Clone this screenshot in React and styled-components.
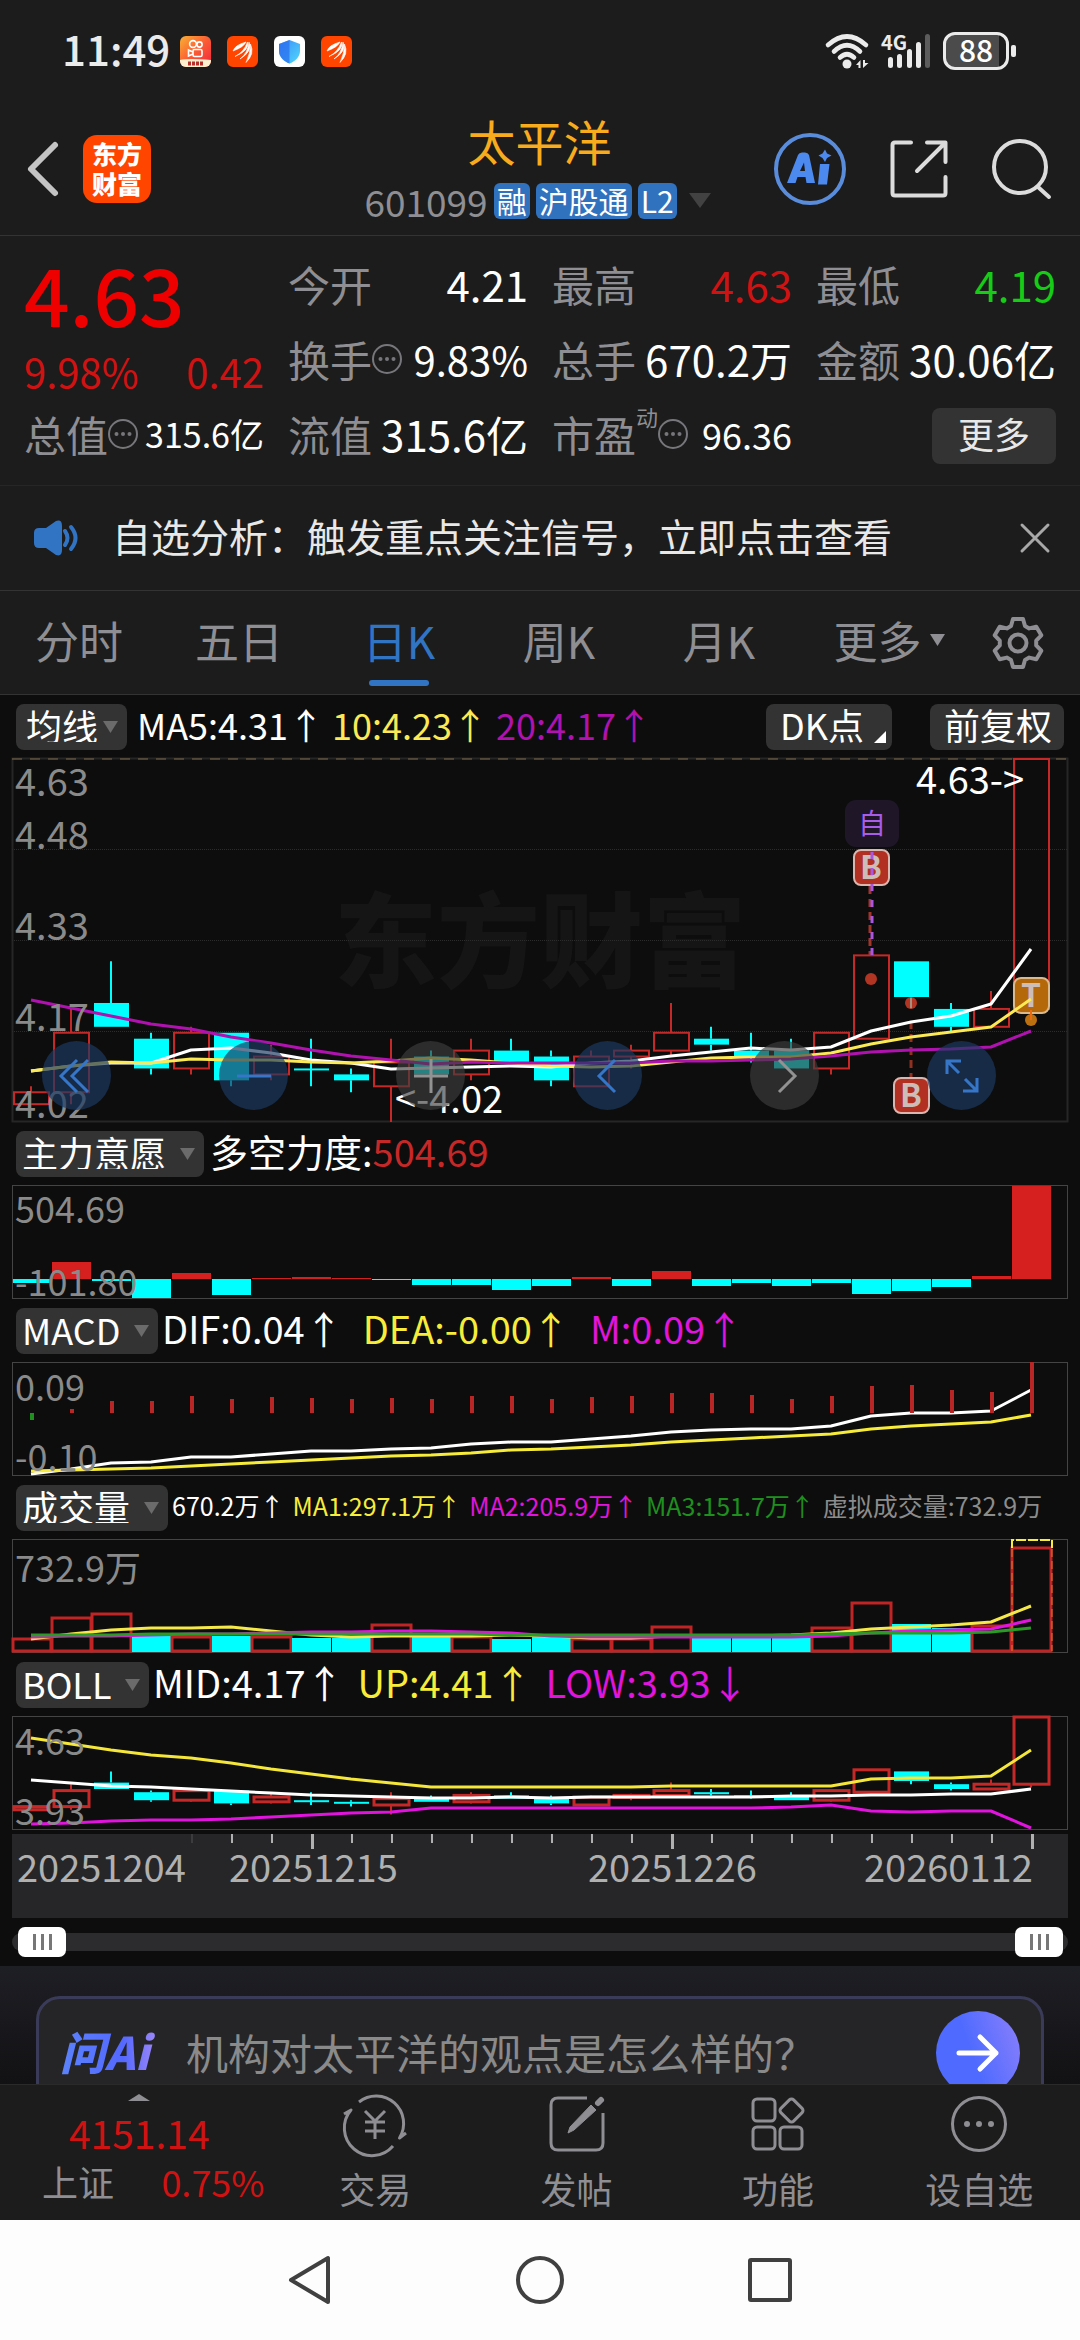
import React from "react";
import styled, { createGlobalStyle, css } from "styled-components";

const c = {
  page: "#1c1c1c",
  chart: "#0d0d0d",
  chip: "#333333",
  line: "#333333",
  dim: "#8e8e93",
  text: "#e8e8e8",
  red: "#d01212",
  up: "#c62828",
  down: "#00ffff",
  blue: "#3274c4",
  yellow: "#f8ec3a",
  magenta: "#e014dc",
  purple: "#b012b0",
  green: "#1f8f1f",
};

const GlobalStyle = createGlobalStyle`
  *, *::before, *::after { box-sizing: border-box; }
  body { margin: 0; background: ${c.page}; }
  body, button, input, select { font-family: "Noto Sans CJK SC", sans-serif; }
  button, select { border: 0; padding: 0; margin: 0; background: none; color: inherit; cursor: pointer; }
  svg { display: block; overflow: visible; }
`;

const Page = styled.div`
  display: flex;
  flex-direction: column;
  color: ${c.text};
  background: ${c.page};
`;

/* ---------- status bar ---------- */
const StatusBar = styled.div`
  display: flex;
  align-items: center;
  justify-content: space-between;
  height: 102px;
  padding: 0 64px 0 62px;
`;
const StatusGroup = styled.div`
  display: flex;
  align-items: center;
  gap: ${(p) => p.$gap}px;
`;
const Clock = styled.time`
  margin-right: -6px;
  padding-bottom: 6px;
  font-size: 42px;
  line-height: 48px;
  font-weight: 500;
  color: #ebebeb;
`;
const Battery = styled.div`
  display: flex;
  align-items: center;
  gap: 2px;
  &::after {
    content: "";
    width: 5px;
    height: 12px;
    border-radius: 2px;
    background: #ebebeb;
  }
`;
const BatteryBody = styled.div`
  width: 66px;
  height: 38px;
  border: 3px solid #ebebeb;
  border-radius: 12px;
  background: linear-gradient(90deg, #4b4b4b 88%, transparent 88%);
  font-size: 30px;
  line-height: 28px;
  font-weight: 500;
  text-align: center;
  color: #fff;
`;

/* ---------- header ---------- */
const Header = styled.header`
  display: grid;
  grid-template-columns: 1fr auto 1fr;
  align-items: center;
  height: 134px;
  padding: 0 28px 0 27px;
  border-bottom: 1px solid ${c.line};
`;
const HeaderSide = styled.div`
  display: flex;
  align-items: center;
  gap: ${(p) => p.$gap}px;
  justify-content: ${(p) => (p.$end ? "flex-end" : "flex-start")};
`;
const IconButton = styled.button`
  display: grid;
  place-items: center;
`;
const BrandLogo = styled.a`
  display: grid;
  grid-template-columns: auto;
  place-content: center;
  width: 68px;
  height: 68px;
  padding-bottom: 2px;
  border-radius: 14px;
  background: #ff4500;
  color: #fff;
  font-size: 25px;
  line-height: 30px;
  font-weight: 900;
  text-decoration: none;
`;
const TitleBlock = styled.div`
  display: flex;
  flex-direction: column;
  align-items: center;
  gap: 14px;
  padding-bottom: 8px;
`;
const StockName = styled.h1`
  margin: 0;
  font-size: 48px;
  line-height: 58px;
  font-weight: 400;
  color: #f8ab1c;
`;
const CodeRow = styled.div`
  display: flex;
  align-items: center;
  gap: 6px;
  font-size: 37px;
  line-height: 36px;
  color: ${c.dim};
`;
const Badge = styled.span`
  height: 36px;
  padding: 0 3px;
  border-radius: 6px;
  background: #3172bf;
  color: #fff;
  font-size: 30px;
  line-height: 34px;
`;

/* ---------- quote ---------- */
const Quote = styled.section`
  display: grid;
  grid-template-columns: repeat(4, 1fr);
  grid-auto-rows: 75px;
  column-gap: 24px;
  padding: 12px 24px;
  border-bottom: 1px solid #262626;
`;
const PriceBlock = styled.div`
  grid-row: span 2;
  display: flex;
  flex-direction: column;
  gap: 12px;
  padding-top: 2px;
  color: ${c.red};
`;
const Price = styled.strong`
  font-size: 80px;
  line-height: 84px;
  font-weight: 500;
  color: #ee0000;
`;
const Change = styled.div`
  display: flex;
  justify-content: space-between;
  font-size: 40px;
  line-height: 50px;
`;
const Cell = styled.div`
  display: flex;
  align-items: center;
  padding-bottom: 3px;
  white-space: nowrap;
  line-height: 50px;
`;
const CellLabel = styled.span`
  font-size: 42px;
  color: ${c.dim};
`;
const CellSup = styled.sup`
  align-self: flex-start;
  margin-top: 6px;
  font-size: 22px;
  line-height: 24px;
  color: ${c.dim};
`;
const CellValue = styled.span`
  margin-left: auto;
  font-size: ${(p) => p.$size || 42}px;
  color: ${(p) => p.$color || "#fff"};
`;
const MoreButton = styled.button`
  align-self: center;
  justify-self: end;
  width: 124px;
  height: 56px;
  padding-bottom: 6px;
  border-radius: 8px;
  background: ${c.chip};
  font-size: 36px;
  line-height: 50px;
`;

/* ---------- notice ---------- */
const Notice = styled.div`
  display: flex;
  align-items: center;
  height: 105px;
  padding: 0 29px 0 34px;
  border-bottom: 1px solid ${c.line};
`;
const NoticeText = styled.a`
  flex: 1;
  margin-left: 32px;
  padding-bottom: 6px;
  color: ${c.text};
  font-size: 39px;
  line-height: 50px;
  text-decoration: none;
`;

/* ---------- tabs ---------- */
const Tabs = styled.nav`
  display: grid;
  grid-template-columns: repeat(5, 160fr) 180fr 76fr 24fr;
  height: 104px;
  border-bottom: 1px solid ${c.line};
`;
const Tab = styled.button`
  position: relative;
  display: flex;
  align-items: center;
  justify-content: center;
  gap: 8px;
  padding: 0 2px 5px 0;
  font-size: 44px;
  line-height: 60px;
  color: ${(p) => (p.$active ? c.blue : c.dim)};
  ${(p) =>
    p.$active &&
    css`
      &::after {
        content: "";
        position: absolute;
        bottom: 8px;
        width: 60px;
        height: 6px;
        border-radius: 3px;
        background: ${c.blue};
      }
    `}
`;
const SettingsButton = styled(IconButton)`
  color: ${c.dim};
`;

/* ---------- charts ---------- */
const ChartArea = styled.main`
  padding: 0 12px;
  background: ${c.chart};
`;
const PanelHead = styled.div`
  display: flex;
  align-items: center;
  height: 63px;
  padding: 0 4px;
  white-space: nowrap;
`;
const SelectBox = styled.span`
  position: relative;
  flex: none;
  height: 46px;
  border-radius: 8px;
  background: ${c.chip};
  color: #fff;
`;
const Select = styled.select`
  appearance: none;
  display: block;
  height: 46px;
  padding: 0 ${(p) => (p.$tight ? 28 : 37)}px 8px ${(p) => (p.$tight ? 10 : 6)}px;
  font-size: 36px;
  line-height: 42px;
`;
const SelectCaret = styled.svg`
  position: absolute;
  top: 17px;
  right: 9px;
  pointer-events: none;
`;
const Legend = styled.div`
  display: flex;
  gap: ${(p) => p.$gap}px;
  margin-left: ${(p) => p.$start}px;
  padding-bottom: 6px;
  font-size: ${(p) => p.$size}px;
  line-height: 46px;
`;
const LegendItem = styled.span`
  color: ${(p) => p.$color};
`;
const HeadActions = styled.div`
  display: flex;
  gap: 38px;
  margin-left: auto;
`;
const ChipButton = styled.button`
  position: relative;
  height: 46px;
  padding: 0 ${(p) => (p.$corner ? 28 : 12)}px 6px 14px;
  border-radius: 8px;
  background: ${c.chip};
  color: #fff;
  font-size: 36px;
  line-height: 40px;
  ${(p) =>
    p.$corner &&
    css`
      &::after {
        content: "";
        position: absolute;
        right: 6px;
        bottom: 7px;
        border-left: 12px solid transparent;
        border-bottom: 12px solid #fff;
      }
    `}
`;
const ChartFrame = styled.div`
  position: relative;
`;
const Chart = styled.svg`
  width: 100%;
  height: auto;
  font-family: "Noto Sans CJK SC", sans-serif;
`;
const ChartControls = styled.div`
  position: absolute;
  left: 30px;
  right: 72px;
  bottom: 12px;
  display: flex;
  justify-content: space-between;
`;
const RoundControl = styled.button`
  display: grid;
  place-items: center;
  width: 69px;
  height: 69px;
  border-radius: 50%;
  color: ${(p) => (p.$muted ? "#929292" : "#3676c8")};
  background: ${(p) => (p.$muted ? "rgba(62, 62, 62, 0.65)" : "rgba(28, 58, 98, 0.68)")};
`;
const AxisWrap = styled.div`
  margin-top: 4px;
  background: #262628;
`;

const RangeWrap = styled.div`
  display: flex;
  align-items: center;
  height: 48px;
`;
const RangeTrack = styled.div`
  position: relative;
  flex: 1;
  height: 18px;
  border-radius: 9px;
  background: #2c2c2e;
`;
const RangeInput = styled.input`
  appearance: none;
  position: absolute;
  left: 6px;
  top: -6px;
  width: calc(100% - 11px);
  height: 30px;
  margin: 0;
  background: none;
  pointer-events: none;
  &::-webkit-slider-thumb {
    appearance: none;
    pointer-events: auto;
    width: 48px;
    height: 30px;
    border-radius: 7px;
    background:
      linear-gradient(#777, #777) 15px 7px / 3px 16px no-repeat,
      linear-gradient(#777, #777) 23px 7px / 3px 16px no-repeat,
      linear-gradient(#777, #777) 31px 7px / 3px 16px no-repeat,
      #fff;
  }
`;

/* ---------- ask bar ---------- */
const AskSection = styled.section`
  height: 118px;
  padding: 30px 36px 0;
  overflow: hidden;
  background: linear-gradient(#1e1e25, #121214);
`;
const AskCard = styled.form`
  display: flex;
  align-items: center;
  height: 114px;
  padding: 0 21px;
  border: 3px solid #3a3b58;
  border-radius: 24px;
  background: #252527;
`;
const AskLogo = styled.span`
  width: 126px;
  padding-bottom: 4px;
  font-size: 45px;
  line-height: 56px;
  font-weight: 900;
  font-style: italic;
  color: transparent;
  background: linear-gradient(90deg, #5b83fb, #5468ff 50%, #a48bf7 80%);
  background-clip: text;
`;
const AskInput = styled.input`
  flex: 1;
  min-width: 0;
  height: 68px;
  padding: 0 0 4px;
  border: 0;
  background: none;
  font-size: 42px;
  color: ${c.text};
  &::placeholder { color: #8a8a8a; opacity: 1; }
`;
const AskButton = styled.button`
  display: grid;
  place-items: center;
  width: 84px;
  height: 84px;
  border-radius: 50%;
  background: linear-gradient(70deg, #4f6bff 45%, #8d80fb);
`;

/* ---------- bottom bars ---------- */
const BottomBar = styled.footer`
  display: grid;
  grid-template-columns: 274fr repeat(4, 201fr);
  height: 136px;
  border-top: 1px solid #2a2a2a;
`;
const IndexBox = styled.button`
  display: flex;
  flex-direction: column;
  align-items: center;
  padding: 9px 10px 0 42px;
  color: ${c.red};
`;
const IndexValue = styled.span`
  margin: 3px 28px 0 0;
  font-size: 39px;
  line-height: 56px;
`;
const IndexRow = styled.span`
  display: flex;
  justify-content: space-between;
  width: 100%;
  font-size: 36px;
  line-height: 42px;
`;
const IndexName = styled.span`
  color: ${c.dim};
`;
const IndexCaret = styled.svg`
  margin-right: 28px;
`;
const NavItem = styled.button`
  display: flex;
  flex-direction: column;
  align-items: center;
  gap: 12px;
  padding-top: 9px;
  font-size: 36px;
  line-height: 44px;
  color: ${c.dim};
`;
const SystemNav = styled.nav`
  display: flex;
  align-items: center;
  justify-content: center;
  gap: 182px;
  height: 120px;
  background: #fdfdfd;
`;

/* ---------- data ---------- */
// open, close, high, low for each trading day
const CANDLES = [
  [4.05, 4.07, 4.08, 4.05], [4.07, 4.17, 4.21, 4.05], [4.22, 4.18, 4.29, 4.18],
  [4.16, 4.11, 4.17, 4.1], [4.11, 4.17, 4.18, 4.1], [4.17, 4.09, 4.17, 4.08],
  [4.1, 4.13, 4.15, 4.09], [4.11, 4.11, 4.16, 4.08], [4.1, 4.09, 4.11, 4.07],
  [4.08, 4.12, 4.16, 4.02], [4.13, 4.1, 4.14, 4.1], [4.1, 4.14, 4.16, 4.09],
  [4.14, 4.12, 4.16, 4.12], [4.13, 4.09, 4.14, 4.08], [4.08, 4.13, 4.14, 4.08],
  [4.13, 4.14, 4.15, 4.11], [4.14, 4.17, 4.22, 4.13], [4.16, 4.15, 4.18, 4.14],
  [4.14, 4.13, 4.17, 4.12], [4.14, 4.11, 4.16, 4.11], [4.11, 4.17, 4.17, 4.1],
  [4.16, 4.3, 4.3, 4.16], [4.29, 4.23, 4.29, 4.21], [4.21, 4.18, 4.22, 4.17],
  [4.18, 4.21, 4.24, 4.18], [4.21, 4.63, 4.63, 4.19],
];
const MA5 = [313, 308, 305, 305, 292, 290, 295, 302, 305, 311, 310, 309, 308, 309, 305, 303, 298, 294, 290, 292, 289, 273, 264, 258, 246, 191];
const MA10 = [313, 308, 304, 305, 301, 302, 302, 304, 305, 303, 300, 302, 305, 308, 309, 308, 304, 300, 299, 299, 295, 286, 279, 274, 269, 241];
const MA20 = [242, 250, 258, 266, 271, 279, 285, 292, 298, 302, 306, 304, 305, 305, 305, 305, 303, 303, 302, 301, 298, 294, 292, 291, 289, 273];
const FORCE = [-4, 17, -2, -19, 6, -16, 1, 2, 1, -1, -6, -6, -11, -7, 2, -7, 8, -7, -4, -7, -4, -15, -12, -8, 3, 93];
const MACD = [-7, 4, 12, 12, 17, 14, 16, 15, 14, 15, 14, 17, 17, 14, 16, 17, 20, 20, 18, 14, 17, 27, 28, 23, 21, 51];
const DIF = [112, 107, 101, 100, 95, 95, 92, 89, 89, 87, 86, 82, 80, 80, 77, 74, 70, 68, 67, 67, 64, 54, 51, 51, 49, 28];
const DEA = [109, 108, 107, 106, 104, 102, 100, 98, 96, 94, 93, 91, 88, 87, 85, 83, 80, 78, 76, 74, 72, 67, 64, 62, 60, 53];
const VOLUME = [13, 34, 38, 16, 15, 16, 15, 14, 14, 27, 15, 15, 13, 15, 13, 13, 25, 14, 15, 15, 24, 49, 28, 24, 26, 104];
const VOL_UP = [1, 1, 1, 0, 1, 0, 1, 0, 0, 1, 0, 1, 0, 0, 1, 1, 1, 0, 0, 0, 1, 1, 0, 0, 1, 1];
const VMA1 = [100, 95, 91, 89, 89, 88, 92, 96, 98, 97, 97, 97, 96, 97, 99, 99, 97, 97, 97, 96, 94, 90, 88, 86, 83, 67];
const VMA2 = [98, 97, 97, 96, 95, 95, 94, 93, 93, 92, 92, 93, 94, 97, 98, 98, 98, 98, 98, 98, 97, 94, 92, 91, 90, 81];
const VMA3 = [96, 96, 96, 95, 95, 95, 95, 95, 95, 95, 95, 95, 96, 96, 96, 96, 96, 96, 96, 96, 95, 94, 94, 94, 93, 89];
const UPPER = [22, 28, 34, 39, 42, 47, 53, 58, 63, 67, 71, 71, 71, 71, 71, 71, 70, 70, 70, 70, 70, 63, 62, 62, 60, 34];
const MIDDLE = [64, 67, 70, 71, 73, 75, 77, 79, 80, 81, 82, 82, 81, 82, 81, 81, 81, 81, 81, 80, 80, 79, 79, 78, 78, 73];
const LOWER = [108, 107, 105, 104, 104, 103, 101, 99, 97, 96, 92, 92, 92, 92, 92, 92, 92, 92, 92, 91, 89, 95, 96, 95, 95, 112];
const TICKS = Array.from({ length: 22 }, (_, i) => i + 4);

const cx = (i) => 19 + 40 * i;

function Line({ data, color, width = 3 }) {
  return (
    <polyline points={data.map((y, i) => `${cx(i)},${y}`).join(" ")} fill="none" stroke={color} strokeWidth={width} strokeLinejoin="round" />
  );
}

function Candles({ low, height, stroke = 2 }) {
  const y = (p) => ((4.63 - p) / (4.63 - low)) * height + 1;
  return CANDLES.map(([o, cl, h, l], i) => {
    const isUp = cl > o;
    const top = y(Math.max(o, cl));
    const bottom = y(Math.min(o, cl));
    const color = isUp ? c.up : c.down;
    const left = Math.max(cx(i) - 17, 2);
    return (
      <g key={i}>
        <path d={`M${cx(i)} ${y(h)}V${top}M${cx(i)} ${bottom}V${y(l)}`} stroke={color} strokeWidth="2" />
        {isUp ? (
          <rect x={left} y={top} width={cx(i) + 18 - left} height={Math.max(bottom - top, 2)} fill="none" stroke={color} strokeWidth={stroke} />
        ) : (
          <rect x={left} y={top} width={cx(i) + 18 - left} height={Math.max(bottom - top, 2)} fill={color} />
        )}
      </g>
    );
  });
}

function ScaleText({ x = 3, y, size = 36, children }) {
  return <text x={x} y={y} fontSize={size} fill="#8a8a8a">{children}</text>;
}

function SubFrame() {
  return <rect x="0.5" y="0.5" width="1055" height="113" fill="none" stroke="#444" />;
}

function SignalTag({ x, y, letter, fill, stroke }) {
  return (
    <g>
      <rect x={x - 17} y={y} width="35" height="35" rx="7" fill={fill} stroke={stroke} strokeWidth="2" />
      <text x={x} y={y + 29} fontSize="32" fontWeight="700" textAnchor="middle" fill="#cdbdb8">{letter}</text>
    </g>
  );
}

function MainChart() {
  return (
    <Chart viewBox="0 0 1056 364" role="img" aria-label="日K线">
      <text x="322" y="222" fontSize="103" fontWeight="900" fill="#151515">东方财富</text>
      <rect x="0.5" y="0.5" width="1055" height="363" fill="none" stroke="#262626" strokeWidth="2" />
      <path d="M0 91.5H1056M0 182.5H1056M0 273.5H1056" stroke="#2c2c2c" strokeDasharray="1 1" />
      <path d="M0 1H1056" stroke="#7d6a48" strokeDasharray="10 8" />
      <Candles low={4.02} height={363} />
      <SignalTag x={859} y={92} letter="B" fill="#b23022" stroke="#dcb5ae" />
      <path d="M858 128V197" stroke="#a23428" strokeWidth="3" strokeDasharray="8 5" />
      <path d="M860 94V197" stroke="#a957e0" strokeWidth="3" strokeDasharray="7 9" />
      <rect x="833" y="42" width="54" height="47" rx="11" fill="#1f1728" />
      <text x="860" y="76" fontSize="28" textAnchor="middle" fill="#a95bea">自</text>
      <circle cx="859" cy="221" r="6" fill="#b23422" />
      <circle cx="899" cy="245" r="6" fill="#b23422" />
      <path d="M899 240V250" stroke="#a8907f" strokeWidth="2" />
      <path d="M899 263V320" stroke="#8f3020" strokeWidth="3" strokeDasharray="8 5" />
      <SignalTag x={899} y={320} letter="B" fill="#b23022" stroke="#dcb5ae" />
      <SignalTag x={1019} y={220} letter="T" fill="#b5680a" stroke="#dcb98a" />
      <circle cx="1019" cy="262" r="6" fill="#bd7010" />
      <path d="M1019 252V262" stroke="#f06a10" strokeWidth="2" />
      <Line data={MA5} color="#ffffff" />
      <Line data={MA10} color="#fbe955" />
      <Line data={MA20} color={c.purple} />
      <ScaleText y={38} size={38}>4.63</ScaleText>
      <ScaleText y={91} size={38}>4.48</ScaleText>
      <ScaleText y={182} size={38}>4.33</ScaleText>
      <ScaleText y={273} size={38}>4.17</ScaleText>
      <ScaleText y={360} size={38}>4.02</ScaleText>
      <text x="904" y="36" fontSize="38" fill="#fff">{"4.63->"}</text>
      <text x="383" y="355" fontSize="38" fill="#fff">{"<-4.02"}</text>
    </Chart>
  );
}

function ForceChart() {
  return (
    <Chart viewBox="0 0 1056 114" role="img" aria-label="主力意愿">
      <SubFrame />
      {FORCE.map((v, i) => {
        const x = Math.max(cx(i) - 19, 1);
        return <rect key={i} x={x} y={v > 0 ? 94 - v : 94} width={cx(i) + 20 - x} height={Math.abs(v)} fill={v > 0 ? "#d61f1f" : c.down} />;
      })}
      <ScaleText y={38}>504.69</ScaleText>
      <ScaleText y={111}>-101.80</ScaleText>
    </Chart>
  );
}

function MacdChart() {
  return (
    <Chart viewBox="0 0 1056 114" role="img" aria-label="MACD">
      <SubFrame />
      <Line data={DIF} color="#ffffff" />
      <Line data={DEA} color={c.yellow} />
      {MACD.map((v, i) => (
        <rect key={i} x={cx(i) - 1} y={v > 0 ? 51 - v : 51} width="4" height={Math.abs(v)} fill={v > 0 ? "#b82626" : c.green} />
      ))}
      <ScaleText y={39}>0.09</ScaleText>
      <ScaleText y={109}>-0.10</ScaleText>
    </Chart>
  );
}

function VolumeChart() {
  return (
    <Chart viewBox="0 0 1056 114" role="img" aria-label="成交量">
      <SubFrame />
      {VOLUME.map((v, i) => {
        const x = Math.max(cx(i) - 19, 1);
        const w = cx(i) + 20 - x;
        return VOL_UP[i] ? (
          <rect key={i} x={x} y={113 - v} width={w} height={v - 1} fill="none" stroke="#c02424" strokeWidth="3" />
        ) : (
          <rect key={i} x={x} y={113 - v} width={w} height={v} fill={c.down} />
        );
      })}
      <path d="M1000 9V1H1040V9" fill="none" stroke={c.yellow} strokeWidth="2" strokeDasharray="10 2" />
      <path d="M1000 10V112M1040 10V112" fill="none" stroke="#e07a28" strokeWidth="1" strokeDasharray="8 4" />
      <Line data={VMA1} color="#f4e84a" />
      <Line data={VMA2} color={c.magenta} />
      <Line data={VMA3} color="#2c9a26" />
      <ScaleText y={43}>732.9万</ScaleText>
    </Chart>
  );
}

function BollChart() {
  return (
    <Chart viewBox="0 0 1056 114" role="img" aria-label="BOLL">
      <SubFrame />
      <Candles low={3.93} height={112} stroke={3} />
      <Line data={UPPER} color="#f4e63a" />
      <Line data={MIDDLE} color="#ffffff" />
      <Line data={LOWER} color={c.magenta} />
      <ScaleText y={39}>4.63</ScaleText>
      <ScaleText y={109}>3.93</ScaleText>
    </Chart>
  );
}

function TimeAxis() {
  return (
    <AxisWrap>
      <Chart viewBox="0 0 1056 84" role="img" aria-label="日期">
        {TICKS.map((i) => {
          const major = i % 9 === 7;
          return <rect key={i} x={cx(i)} y="0" width={major ? 3 : 2} height={major ? 15 : 9} fill={i === 4 ? "#3c3c3e" : "#b0b0b0"} />;
        })}
        <g fontSize="38" fill="#b0b0b0">
          <text x="5" y="48">20251204</text>
          <text x="217" y="48">20251215</text>
          <text x="576" y="48">20251226</text>
          <text x="852" y="48">20260112</text>
        </g>
      </Chart>
    </AxisWrap>
  );
}

/* ---------- icons ---------- */
function Caret({ size = 15, color = "#6b6b6b", ...rest }) {
  return (
    <svg width={size} height={size - 3} viewBox="0 0 15 12" aria-hidden="true" {...rest}>
      <path d="M0 0H15L7.5 12Z" fill={color} />
    </svg>
  );
}

function InfoDots() {
  return (
    <svg width="30" height="30" viewBox="0 0 30 30" aria-hidden="true">
      <circle cx="15" cy="15" r="14" fill="none" stroke="#77777b" strokeWidth="2" />
      <g fill="#77777b">
        <circle cx="8.5" cy="15" r="2" />
        <circle cx="15" cy="15" r="2" />
        <circle cx="21.5" cy="15" r="2" />
      </g>
    </svg>
  );
}

function FeatherApp() {
  return (
    <svg width="31" height="31" viewBox="0 0 31 31" aria-hidden="true">
      <rect width="31" height="31" rx="6" fill="#ff4500" />
      <path d="M6 15Q8 9 19 6Q17 11 6 15ZM8 20.500Q17 16 20.500 6Q23 14 8 20.500ZM13 23Q21 17 22 6Q26 15 13 23ZM19 26.500Q23.500 17 23.500 8Q28 18 19 26.500Z" fill="#fff" stroke="#fff" strokeWidth="0.600" />
    </svg>
  );
}

function VideoApp() {
  return (
    <svg width="31" height="31" viewBox="0 0 31 31" aria-hidden="true">
      <defs>
        <linearGradient id="video" x1="0" y1="0" x2="1" y2="1">
          <stop offset="0" stopColor="#f9b233" />
          <stop offset="0.5" stopColor="#fb5c33" />
          <stop offset="1" stopColor="#f0233f" />
        </linearGradient>
      </defs>
      <rect width="31" height="31" rx="6" fill="url(#video)" />
      <g fill="none" stroke="#fff" strokeWidth="1.600">
        <circle cx="13" cy="8" r="3.400" />
        <circle cx="19.500" cy="8.500" r="2.600" />
        <rect x="13" y="13.500" width="9" height="7" rx="1.500" />
        <path d="M13 16L8.500 14V20L13 18" />
      </g>
      <path d="M0 24Q8 22 31 24V25A6 6 0 0 1 25 31H6A6 6 0 0 1 0 25Z" fill="#fff0d0" />
      <path d="M8 27.500H24" stroke="#b5302a" strokeWidth="4" strokeDasharray="3 1" />
    </svg>
  );
}

function ShieldApp() {
  return (
    <svg width="31" height="31" viewBox="0 0 31 31" aria-hidden="true">
      <defs>
        <linearGradient id="shield" x1="0" y1="0" x2="1" y2="1">
          <stop offset="0" stopColor="#3b8cf8" />
          <stop offset="1" stopColor="#4fd8fb" />
        </linearGradient>
      </defs>
      <rect width="31" height="31" rx="6" fill="#fff" />
      <path d="M15.500 4L26 8V15C26 21 21 25.500 15.500 27.500C10 25.500 5 21 5 15V8Z" fill="url(#shield)" />
      <path d="M15.500 4V27.500C10 25.500 5 21 5 15V8Z" fill="#2a6cf0" opacity="0.700" />
    </svg>
  );
}

function Wifi() {
  return (
    <svg width="44" height="36" viewBox="0 0 44 36" aria-hidden="true">
      <g fill="none" stroke="#ebebeb" strokeWidth="4.600" strokeLinecap="round">
        <path d="M3 12Q22 -5 41 12" />
        <path d="M9 18.500Q22 6 35 18.500" />
        <path d="M15 24.500Q22 18 29 24.500" />
      </g>
      <circle cx="22" cy="31" r="4.500" fill="#ebebeb" />
      <path d="M35.500 27V35H33.500V32H31ZM38 35V27L40 27V30H43.500Z" fill="#ebebeb" />
    </svg>
  );
}

function Signal() {
  return (
    <svg width="50" height="36" viewBox="0 0 50 36" fill="#ebebeb" aria-hidden="true">
      <text x="0" y="17" fontSize="20" fontWeight="700">4G</text>
      <rect x="7" y="24" width="5" height="11" rx="2.500" />
      <rect x="16" y="21" width="5" height="14" rx="2.500" />
      <rect x="26" y="16" width="5" height="19" rx="2.500" />
      <rect x="35" y="9" width="5" height="26" rx="2.500" />
      <rect x="44" y="1" width="5" height="34" rx="2.500" fill="#5c5c5c" />
    </svg>
  );
}

function AiIcon() {
  return (
    <svg width="72" height="72" viewBox="0 0 72 72" aria-hidden="true">
      <circle cx="36" cy="36" r="34" fill="none" stroke="#5a8cdc" strokeWidth="4" />
      <path d="M13 50L24 22Q25 19.500 28 19.500H31Q34 19.500 35 22L41 50H32.500L31.500 44H23.500L21.500 50ZM26 38H31L30 29.500Z" fill="#4c8af0" />
      <path d="M46 31H55.500L53 51.500H44ZM51 16.500L53 20.500L57.500 22.500L53 25L51 29L48.500 25L44.500 22.500L48.500 20.500Z" fill="#4c8af0" />
    </svg>
  );
}

function ShareIcon() {
  return (
    <svg width="58" height="58" viewBox="0 0 58 58" fill="none" stroke="#dcdcdc" strokeWidth="4" strokeLinecap="round" strokeLinejoin="round" aria-hidden="true">
      <path d="M21 2.500H5Q2.500 2.500 2.500 5V53Q2.500 55.500 5 55.500H53Q55.500 55.500 55.500 53V37" />
      <path d="M37 2.500H55.500V22M55 3L27 31" />
    </svg>
  );
}

function SearchIcon() {
  return (
    <svg width="60" height="60" viewBox="0 0 60 60" fill="none" stroke="#dcdcdc" strokeWidth="4" strokeLinecap="round" aria-hidden="true">
      <circle cx="28" cy="28" r="26" />
      <path d="M46 48L57 58" />
    </svg>
  );
}

function Speaker() {
  return (
    <svg width="46" height="36" viewBox="0 0 46 36" aria-hidden="true">
      <path d="M5 8H12L22 1Q28 -1 28 6V30Q28 37 22 35L12 28H5Q0 28 0 23V13Q0 8 5 8Z" fill={c.blue} />
      <path d="M31 11Q36 18 31 25M37 7Q46 18 37 29" fill="none" stroke={c.blue} strokeWidth="4" strokeLinecap="round" />
    </svg>
  );
}

function Gear() {
  const points = [];
  for (let k = 0; k < 6; k += 1) {
    const a = (k * Math.PI) / 3;
    [[-7, -17], [-5, -24], [5, -24], [7, -17]].forEach(([x, y]) => {
      points.push(`${(x * Math.cos(a) - y * Math.sin(a)).toFixed(1)},${(x * Math.sin(a) + y * Math.cos(a)).toFixed(1)}`);
    });
  }
  return (
    <svg width="54" height="54" viewBox="-27 -27 54 54" fill="none" stroke="currentColor" strokeWidth="4" strokeLinejoin="round" aria-hidden="true">
      <polygon points={points.join(" ")} />
      <circle r="8.500" />
    </svg>
  );
}

function ControlIcon({ d, width = 3 }) {
  return (
    <svg width="40" height="40" viewBox="-20 -20 40 40" fill="none" stroke="currentColor" strokeWidth={width} aria-hidden="true">
      <path d={d} />
    </svg>
  );
}

const navIcons = {
  trade: (
    <>
      <path d="M-16 -22A27.500 27.500 0 0 1 24.500 14L31 9" />
      <path d="M18 22A27.500 27.500 0 0 1 -24 -14L-31 -10" />
      <path d="M-10 -13L0 -3L10 -13M0 -3V15M-10 -2H10M-10 7H10" />
    </>
  ),
  post: (
    <>
      <path d="M10 -26H-19Q-26 -26 -26 -19V19Q-26 26 -19 26H19Q26 26 26 19V-11" />
      <path d="M-9 9L-7 3L14 -19L19 -14L-3 6Z" fill="currentColor" strokeWidth="1" />
      <path d="M21 -21L24 -24" strokeWidth="6" strokeLinecap="round" />
    </>
  ),
  tools: (
    <>
      <rect x="-25" y="-25" width="22" height="22" rx="4" />
      <rect x="-25" y="3" width="22" height="22" rx="4" />
      <rect x="2" y="3" width="22" height="22" rx="4" />
      <rect x="4.500" y="-22.500" width="18" height="18" rx="3" transform="rotate(45 13.500 -13.500)" />
    </>
  ),
  more: (
    <>
      <circle r="26.500" />
      <g fill="currentColor" stroke="none">
        <circle cx="-12" r="3" />
        <circle r="3" />
        <circle cx="12" r="3" />
      </g>
    </>
  ),
};

function NavIcon({ name }) {
  return (
    <svg width="64" height="60" viewBox="-32 -30 64 60" fill="none" stroke="currentColor" strokeWidth="3" strokeLinejoin="round" aria-hidden="true">
      {navIcons[name]}
    </svg>
  );
}

function SystemIcon({ children }) {
  return (
    <svg width="48" height="48" viewBox="-24 -24 48 48" fill="none" stroke="#404040" strokeWidth="4" strokeLinejoin="round" aria-hidden="true">
      {children}
    </svg>
  );
}

/* ---------- composed parts ---------- */
function IndicatorSelect({ name, tight }) {
  return (
    <SelectBox>
      <Select aria-label="指标" $tight={tight} defaultValue={name}>
        <option>{name}</option>
      </Select>
      <SelectCaret width="15" height="12" viewBox="0 0 15 12" aria-hidden="true">
        <path d="M0 0H15L7.500 12Z" fill="#6b6b6b" />
      </SelectCaret>
    </SelectBox>
  );
}

function IndicatorHead({ name, items, size = 38, gap = 16 }) {
  return (
    <PanelHead>
      <IndicatorSelect name={name} />
      <Legend $size={size} $gap={gap} $start={4}>
        {items.map(([text, color]) => (
          <LegendItem key={text} $color={color}>{text}</LegendItem>
        ))}
      </Legend>
    </PanelHead>
  );
}

const QUOTE_ROWS = [
  { label: "今开", value: "4.21" },
  { label: "最高", value: "4.63", color: c.red },
  { label: "最低", value: "4.19", color: "#16cc16" },
  { label: "换手", value: "9.83%", info: true, size: 40 },
  { label: "总手", value: "670.2万" },
  { label: "金额", value: "30.06亿" },
  { label: "总值", value: "315.6亿", info: true, size: 34 },
  { label: "流值", value: "315.6亿" },
  { label: "市盈", value: "96.36", sup: "动", info: true, size: 36 },
];

export default function App() {
  return (
    <Page>
      <GlobalStyle />
      <StatusBar>
        <StatusGroup $gap={16}>
          <Clock>11:49</Clock>
          <VideoApp />
          <FeatherApp />
          <ShieldApp />
          <FeatherApp />
        </StatusGroup>
        <StatusGroup $gap={12}>
          <Wifi />
          <Signal />
          <Battery>
            <BatteryBody>88</BatteryBody>
          </Battery>
        </StatusGroup>
      </StatusBar>

      <Header>
        <HeaderSide $gap={24}>
          <IconButton aria-label="返回">
            <svg width="32" height="56" viewBox="0 0 32 56" fill="none" stroke="#c4c4c4" strokeWidth="6" strokeLinecap="round" strokeLinejoin="round" aria-hidden="true">
              <path d="M28 4L4 28L28 52" />
            </svg>
          </IconButton>
          <BrandLogo href="#home">
            <span>东方</span>
            <span>财富</span>
          </BrandLogo>
        </HeaderSide>
        <TitleBlock>
          <StockName>太平洋</StockName>
          <CodeRow>
            <span>601099</span>
            <Badge>融</Badge>
            <Badge>沪股通</Badge>
            <Badge>L2</Badge>
            <svg width="32" height="16" viewBox="0 0 32 16" aria-hidden="true">
              <path d="M6 0H28L17 15Z" fill="#424242" />
            </svg>
          </CodeRow>
        </TitleBlock>
        <HeaderSide $gap={44} $end>
          <IconButton aria-label="AI"><AiIcon /></IconButton>
          <IconButton aria-label="分享"><ShareIcon /></IconButton>
          <IconButton aria-label="搜索"><SearchIcon /></IconButton>
        </HeaderSide>
      </Header>

      <Quote>
        <PriceBlock>
          <Price>4.63</Price>
          <Change>
            <span>9.98%</span>
            <span>0.42</span>
          </Change>
        </PriceBlock>
        {QUOTE_ROWS.map((q) => (
          <Cell key={q.label}>
            <CellLabel>{q.label}</CellLabel>
            {q.sup && <CellSup>{q.sup}</CellSup>}
            {q.info && <InfoDots />}
            <CellValue $size={q.size} $color={q.color}>{q.value}</CellValue>
          </Cell>
        ))}
        <MoreButton>更多</MoreButton>
      </Quote>

      <Notice>
        <Speaker />
        <NoticeText href="#signal">自选分析：触发重点关注信号，立即点击查看</NoticeText>
        <IconButton aria-label="关闭">
          <svg width="32" height="32" viewBox="0 0 32 32" stroke="#a8a8a8" strokeWidth="3" strokeLinecap="round" aria-hidden="true">
            <path d="M3 3L29 29M29 3L3 29" />
          </svg>
        </IconButton>
      </Notice>

      <Tabs>
        <Tab>分时</Tab>
        <Tab>五日</Tab>
        <Tab $active>日K</Tab>
        <Tab>周K</Tab>
        <Tab>月K</Tab>
        <Tab>更多<Caret color={c.dim} /></Tab>
        <SettingsButton aria-label="设置"><Gear /></SettingsButton>
      </Tabs>

      <ChartArea>
        <PanelHead>
          <IndicatorSelect name="均线" tight />
          <Legend $size={36} $gap={8} $start={10}>
            <LegendItem $color="#ffffff">MA5:4.31↑</LegendItem>
            <LegendItem $color="#fbe955">10:4.23↑</LegendItem>
            <LegendItem $color={c.purple}>20:4.17↑</LegendItem>
          </Legend>
          <HeadActions>
            <ChipButton $corner>DK点</ChipButton>
            <ChipButton>前复权</ChipButton>
          </HeadActions>
        </PanelHead>
        <ChartFrame>
          <MainChart />
          <ChartControls>
            <RoundControl aria-label="最早"><ControlIcon d="M0 -16L-16 0L0 16M11 -16L-5 0L11 16" /></RoundControl>
            <RoundControl aria-label="缩小"><ControlIcon d="M-17 0H17" /></RoundControl>
            <RoundControl aria-label="放大" $muted><ControlIcon d="M-17 0H17M0 -17V17" /></RoundControl>
            <RoundControl aria-label="左移"><ControlIcon d="M7 -16L-9 0L7 16" /></RoundControl>
            <RoundControl aria-label="右移" $muted><ControlIcon d="M-6 -16L10 0L-6 16" /></RoundControl>
            <RoundControl aria-label="全屏"><ControlIcon d="M-15 -2V-15H-1M-15 -15L-3 -3M15 2V15H1M15 15L3 3" /></RoundControl>
          </ChartControls>
        </ChartFrame>

        <PanelHead>
          <IndicatorSelect name="主力意愿" />
          <Legend $size={38} $gap={0} $start={6}>
            <LegendItem $color="#ffffff">多空力度:</LegendItem>
            <LegendItem $color={c.up}>504.69</LegendItem>
          </Legend>
        </PanelHead>
        <ForceChart />

        <IndicatorHead name="MACD" gap={20} items={[["DIF:0.04↑", "#ffffff"], ["DEA:-0.00↑", c.yellow], ["M:0.09↑", c.magenta]]} />
        <MacdChart />

        <IndicatorHead
          name="成交量"
          size={25}
          gap={8}
          items={[["670.2万↑", "#ffffff"], ["MA1:297.1万↑", c.yellow], ["MA2:205.9万↑", c.magenta], ["MA3:151.7万↑", c.green], ["虚拟成交量:732.9万", "#8c8c8c"]]}
        />
        <VolumeChart />

        <IndicatorHead name="BOLL" gap={14} items={[["MID:4.17↑", "#ffffff"], ["UP:4.41↑", c.yellow], ["LOW:3.93↓", c.magenta]]} />
        <BollChart />

        <TimeAxis />
        <RangeWrap>
          <RangeTrack>
            <RangeInput type="range" aria-label="起始" defaultValue={0} />
            <RangeInput type="range" aria-label="结束" defaultValue={100} />
          </RangeTrack>
        </RangeWrap>
      </ChartArea>

      <AskSection>
        <AskCard>
          <AskLogo>问Ai</AskLogo>
          <AskInput aria-label="提问" placeholder="机构对太平洋的观点是怎么样的？" />
          <AskButton type="button" aria-label="发送">
            <svg width="44" height="40" viewBox="0 0 44 40" fill="none" stroke="#fff" strokeWidth="5" strokeLinecap="round" strokeLinejoin="round" aria-hidden="true">
              <path d="M3 20H40M24 4L40 20L24 36" />
            </svg>
          </AskButton>
        </AskCard>
      </AskSection>

      <BottomBar>
        <IndexBox>
          <IndexCaret width="22" height="7" viewBox="0 0 22 7" aria-hidden="true">
            <path d="M0 7L11 0L22 7Z" fill={c.dim} />
          </IndexCaret>
          <IndexValue>4151.14</IndexValue>
          <IndexRow>
            <IndexName>上证</IndexName>
            <span>0.75%</span>
          </IndexRow>
        </IndexBox>
        <NavItem><NavIcon name="trade" />交易</NavItem>
        <NavItem><NavIcon name="post" />发帖</NavItem>
        <NavItem><NavIcon name="tools" />功能</NavItem>
        <NavItem><NavIcon name="more" />设自选</NavItem>
      </BottomBar>

      <SystemNav>
        <IconButton aria-label="返回上一页">
          <SystemIcon><path d="M18 -22V22L-19 0Z" /></SystemIcon>
        </IconButton>
        <IconButton aria-label="主屏幕">
          <SystemIcon><circle r="22" /></SystemIcon>
        </IconButton>
        <IconButton aria-label="最近任务">
          <SystemIcon><rect x="-20" y="-20" width="40" height="40" rx="1" /></SystemIcon>
        </IconButton>
      </SystemNav>
    </Page>
  );
}
